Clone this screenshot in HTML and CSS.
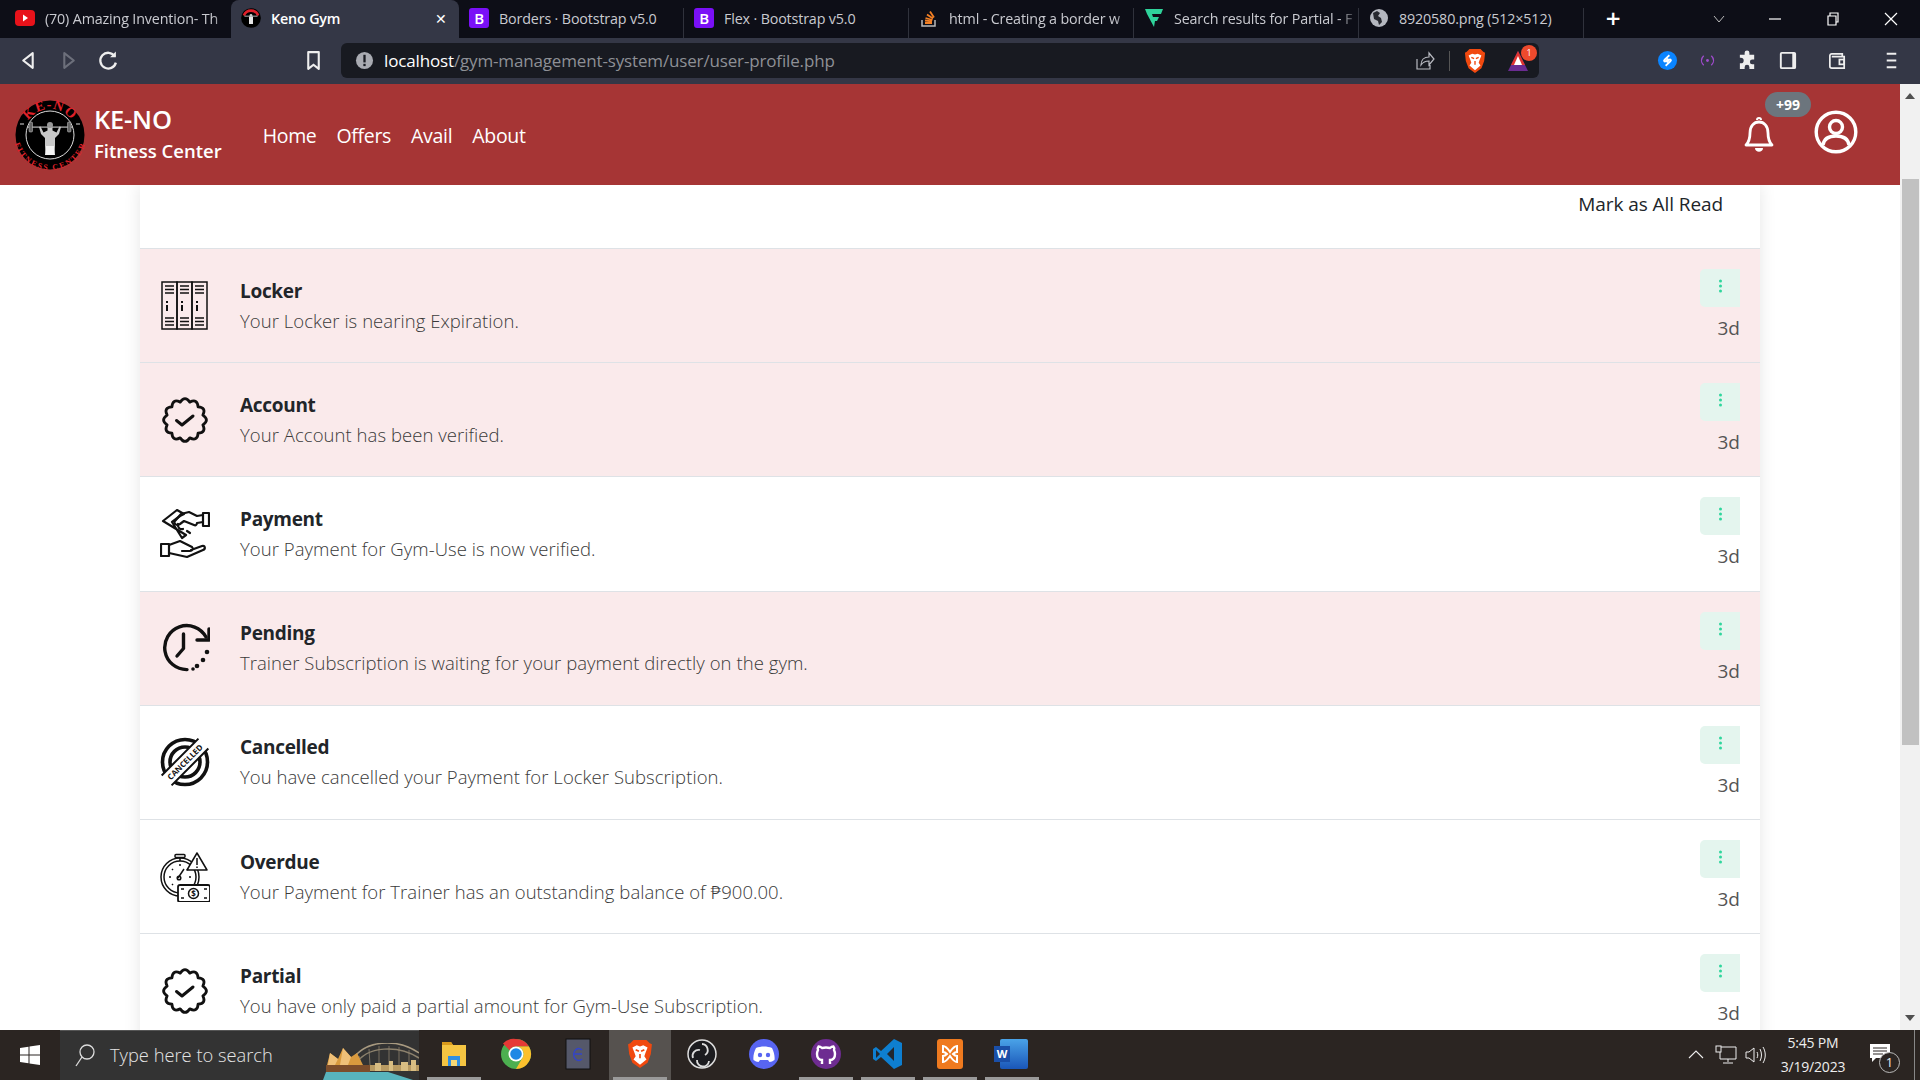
FILE: index.html

```html
<!DOCTYPE html>
<html lang="en">
<head>
  <meta charset="UTF-8" />
  <meta name="viewport" content="width=device-width, initial-scale=1.0"/>
  <title>Keno Gym</title>
  <link rel="stylesheet" href="styles.css">
</head>
<body>
  <svg class="defs" width="0" height="0">
    <symbol id="i-locker" viewBox="0 0 50 50">
      <g fill="none" stroke="#111" stroke-width="1.500">
        <rect x="2" y="1" width="15" height="47"/><rect x="17" y="1" width="15" height="47"/><rect x="32" y="1" width="15" height="47"/>
        <path d="M5 5h9M5 8.500h9M5 12h9M20 5h9M20 8.500h9M20 12h9M35 5h9M35 8.500h9M35 12h9"/>
        <path d="M5 37h9M5 40.500h9M5 44h9M20 37h9M20 40.500h9M20 44h9M35 37h9M35 40.500h9M35 44h9"/>
        <path d="M7 24v6M22 24v6M37 24v6" stroke-width="2"/>
        <path d="M7 20v2M22 20v2M37 20v2" stroke-width="2"/>
      </g>
    </symbol>
    <symbol id="i-badge" viewBox="0 0 50 50">
      <path fill="none" stroke="#111" stroke-width="2.800" stroke-linejoin="round" d="M20.210 7.130Q25 0 29.790 7.130Q37.500 3.350 38.080 11.920Q46.650 12.500 42.870 20.210Q50 25 42.870 29.790Q46.650 37.500 38.080 38.080Q37.500 46.650 29.790 42.870Q25 50 20.210 42.870Q12.500 46.650 11.920 38.080Q3.350 37.500 7.130 29.790Q0 25 7.130 20.210Q3.350 12.500 11.920 11.920Q12.500 3.350 20.210 7.130Z"/>
      <path fill="none" stroke="#111" stroke-width="3" stroke-linecap="round" stroke-linejoin="round" d="M16.500 25.500l5.500 4.500 11-9"/>
    </symbol>
    <symbol id="i-payment" viewBox="0 0 50 50">
      <g fill="none" stroke="#111" stroke-width="2.200" stroke-linejoin="round" stroke-linecap="round">
        <rect x="43" y="4" width="6" height="13"/>
        <path d="M3 12L17 1l7 4-4 2-8 6 10 16 4-3L3 12z"/>
        <path d="M43 6l-6 1-8-4-8 2-6 7c-2 3 2 5 5 3l4-3 5 2 5 2c2 1 3-1 3-2l6-1"/>
        <path d="M18 15c-1 3 2 6 5 5M27 22l3 2"/>
        <rect x="1" y="35" width="8" height="12"/>
        <path d="M9 36l11-4 12 6c2 2 0 4-2 4h-8M31 41l11-4c3-1 4 3 1 4l-16 7-18-4"/>
      </g>
    </symbol>
    <symbol id="i-pending" viewBox="0 0 50 50">
      <g fill="none" stroke="#111" stroke-width="3.400" stroke-linecap="round" stroke-linejoin="round">
        <path d="M27 46.600A22 22 0 1 1 46 14"/>
        <path d="M23.500 11v14.500L17 33"/>
        <path d="M49 6v11H37"/>
      </g>
      <g fill="#111"><circle cx="47" cy="29" r="2.300"/><circle cx="43" cy="37" r="2.300"/><circle cx="37" cy="43" r="2.300"/><circle cx="33" cy="46" r="1.800"/></g>
    </symbol>
    <symbol id="i-dots" viewBox="0 0 4 14">
      <circle cx="2" cy="2" r="1.500"/><circle cx="2" cy="7" r="1.500"/><circle cx="2" cy="12" r="1.500"/>
    </symbol>
    <symbol id="i-logo-mini" viewBox="0 0 70 70">
      <circle cx="35" cy="35" r="34.500" fill="#000"/>
      <path d="M10 26a27 27 0 0 1 50 0" fill="none" stroke="#e0202a" stroke-width="9"/>
      <rect x="12" y="27" width="46" height="3" fill="#ccc"/>
      <path d="M28 30h14v26H28z" fill="#e6e6e6"/>
      <circle cx="35" cy="26" r="5" fill="#ccc"/>
    </symbol>
    <symbol id="i-lion" viewBox="0 0 24 28">
      <path d="M6 1h12l3 3 2 1-1 9-3 8-7 5-7-5-3-8-1-9 2-1z" fill="#f1490f"/>
      <path d="M5 8l4-2 3 1 3-1 4 2-2 5-1 3 2 3-6 5-6-5 2-3-1-3z" fill="#fff"/>
      <path d="M8 10l3 1.500M16 10l-3 1.500M12 14v4" stroke="#f1490f" stroke-width="1.500"/>
    </symbol>
  </svg>

  <div class="tabstrip">
    <div class="tab first">
      <svg class="fav" viewBox="0 0 20 20"><rect y="2" width="20" height="16" rx="4" fill="#e8121a"/><path d="M8 6.500l5 3.500-5 3.500z" fill="#fff"/></svg>
      <span class="tab-title fade">(70) Amazing Invention- Th</span>
    </div>
    <div class="tab active">
      <svg class="fav"><use href="#i-logo-mini"/></svg>
      <span class="tab-title">Keno Gym</span>
      <span class="tab-x">✕</span>
    </div>
    <div class="tab">
      <span class="fav-b">B</span>
      <span class="tab-title">Borders · Bootstrap v5.0</span>
    </div>
    <div class="tab">
      <span class="fav-b">B</span>
      <span class="tab-title">Flex · Bootstrap v5.0</span>
    </div>
    <div class="tab">
      <svg class="fav" viewBox="0 0 20 20"><path d="M3 12v6h13v-6" fill="none" stroke="#bbb" stroke-width="1.500"/><path d="M6 15h7M6 12.500l7 .8M6.500 10l7 2M8 6.500l6 4M11 3.500l4 6" stroke="#f48024" stroke-width="1.800" fill="none"/></svg>
      <span class="tab-title fade">html - Creating a border w</span>
    </div>
    <div class="tab">
      <svg class="fav" viewBox="0 0 20 20"><path d="M1 1h18l-2 5H8l1 3h6l-2 4H11l-1 6L3 6z" fill="#2fd39b"/></svg>
      <span class="tab-title fade">Search results for Partial - F</span>
    </div>
    <div class="tab">
      <svg class="fav" viewBox="0 0 20 20"><circle cx="10" cy="10" r="9" fill="#b4b7bf"/><path d="M4 5l4-2 3 2-2 3 3 2 1 4-3 3-1-4-4-2z" fill="#26282f"/></svg>
      <span class="tab-title">8920580.png (512×512)</span>
    </div>
    <span class="newtab">+</span>
    <div class="win-btns">
      <svg viewBox="0 0 14 14" class="win chevron"><path d="M2 4l5 6 5-6" fill="none" stroke="#bbb"/></svg>
      <svg viewBox="0 0 14 14" class="win"><path d="M1 7h12" stroke="#fff" stroke-width="1.200"/></svg>
      <svg viewBox="0 0 14 14" class="win"><path d="M2 4h8v9H2zM4 4V1h8v9h-2" fill="none" stroke="#fff" stroke-width="1.200"/></svg>
      <svg viewBox="0 0 14 14" class="win"><path d="M1 1l12 12M13 1L1 13" stroke="#fff" stroke-width="1.200"/></svg>
    </div>
  </div>

  <div class="toolbar">
    <span class="tool"><svg viewBox="0 0 20 20"><path d="M14 3L5 10l9 7z" fill="none" stroke="#eee" stroke-width="2" stroke-linejoin="round"/></svg></span>
    <span class="tool"><svg viewBox="0 0 20 20"><path d="M6 3l9 7-9 7z" fill="none" stroke="#6c6f7b" stroke-width="2" stroke-linejoin="round"/></svg></span>
    <span class="tool"><svg viewBox="0 0 20 20"><path d="M16 6a7.500 7.500 0 1 0 1 6" fill="none" stroke="#eee" stroke-width="2.200"/><path d="M17 1.500V7h-5.500z" fill="#eee"/></svg></span>
    <span class="tool bookmark"><svg viewBox="0 0 20 20"><path d="M5 2h10v16l-5-4-5 4z" fill="none" stroke="#eee" stroke-width="2" stroke-linejoin="round"/></svg></span>
    <div class="urlbar">
      <svg class="url-info" viewBox="0 0 20 20"><circle cx="10" cy="10" r="9" fill="#a9abb2"/><rect x="8.800" y="4" width="2.400" height="8" fill="#181a21"/><rect x="8.800" y="13.500" width="2.400" height="2.400" fill="#181a21"/></svg>
      <span class="url"><span class="url-host">localhost</span>/gym-management-system/user/user-profile.php</span>
      <svg class="url-share" viewBox="0 0 20 20"><path d="M2 8v10h13v-4M6 14c0-5 3-8 8-8V2l5 6-5 6v-4c-4 0-6 1-8 4z" fill="none" stroke="#b9bbc2" stroke-width="1.200"/></svg>
      <span class="url-sep"></span>
      <svg class="url-lion"><use href="#i-lion"/></svg>
      <span class="url-alert">
        <svg viewBox="0 0 24 24"><path d="M12 2L22 22H2z" fill="#6a2c91"/><path d="M12 2L19 16H5z" fill="#e0342f"/><path d="M12 7l4 9H8z" fill="#fff"/></svg>
        <span class="alert-count">1</span>
      </span>
    </div>
    <span class="tool shazam"><svg viewBox="0 0 22 22"><circle cx="11" cy="11" r="10" fill="#0a84ff"/><path d="M13 5.500L8 10c-1.500 1.500 0 3 1.500 1.500L12 9M9 16.500l5-4.500c1.500-1.500 0-3-1.500-1.500L10 13" fill="none" stroke="#fff" stroke-width="1.800"/></svg></span>
    <span class="tool"><svg viewBox="0 0 22 22"><circle cx="11" cy="11" r="1.500" fill="#a24bd0"/><path d="M7 6c-3 3-3 7 0 10M15 6c3 3 3 7 0 10" fill="none" stroke="#a24bd0" stroke-width="1.400"/></svg></span>
    <span class="tool"><svg viewBox="0 0 22 22"><path d="M8 3a2.500 2.500 0 0 1 5 0v2h5v5h-2a2.500 2.500 0 0 0 0 5h2v5h-5v-2a2.500 2.500 0 0 0-5 0v2H3v-6h1a3 3 0 0 0 0-6H3V5h5z" fill="#eee"/></svg></span>
    <span class="tool"><svg viewBox="0 0 22 22"><rect x="4" y="3" width="15" height="16" rx="1" fill="none" stroke="#eee" stroke-width="2"/><rect x="16" y="3" width="3" height="16" fill="#eee"/></svg></span>
    <span class="tool wallet"><svg viewBox="0 0 22 22"><path d="M3 6a2 2 0 0 1 2-2h11v3H5M3 6v11a2 2 0 0 0 2 2h13V7H5" fill="none" stroke="#eee" stroke-width="1.800"/><rect x="13" y="10" width="5" height="5" fill="none" stroke="#eee" stroke-width="1.800"/></svg></span>
    <span class="tool menu"><svg viewBox="0 0 22 22"><path d="M6 4h10M6 11h10M6 18h10" stroke="#eee" stroke-width="2"/></svg></span>
  </div>

  <div class="viewport">
    <div class="page">
      <nav class="navbar">
        <svg class="brand-logo" viewBox="0 0 70 70">
          <circle cx="35" cy="35" r="34.500" fill="#000"/>
          <circle cx="35" cy="35" r="24" fill="#000" stroke="#ddd" stroke-width="1"/>
          <path id="arc-top" d="M9 35a26 26 0 0 1 52 0" fill="none"/>
          <path id="arc-bottom" d="M4 33a31 31 0 0 0 62 0" fill="none"/>
          <text class="logo-top"><textPath href="#arc-top" startOffset="50%">KE-NO</textPath></text>
          <text class="logo-bottom"><textPath href="#arc-bottom" startOffset="50%">FITNESS CENTER</textPath></text>
          <rect x="12" y="26.500" width="46" height="1.200" fill="#bbb"/>
          <rect x="14" y="22" width="3.500" height="10" rx="1" fill="#666" stroke="#ccc" stroke-width=".5"/><rect x="52.500" y="22" width="3.500" height="10" rx="1" fill="#666" stroke="#ccc" stroke-width=".5"/>
          <path d="M5 24h4M61 24h4" stroke="#ddd" stroke-width="1.200"/>
          <path d="M24 27l2 7 4 4v8l1 9h8l1-9v-8l4-4 2-7-1.500-.5-3 6-4-2v-4h-5v4l-4 2-3-6z" fill="#c8c8c8"/>
          <path d="M31 46h8l1 9H30z" fill="#f2f2f2"/>
          <circle cx="35" cy="25" r="3" fill="#999"/>
        </svg>
        <div class="brand-text">
          <span class="brand-name">KE-NO</span>
          <span class="brand-sub">Fitness Center</span>
        </div>
        <ul class="nav-links">
          <li>Home</li>
          <li>Offers</li>
          <li>Avail</li>
          <li>About</li>
        </ul>
        <div class="nav-icons">
          <span class="bell">
            <svg viewBox="0 0 32 36"><path d="M3 28c3-3 4-6 4-12 0-7 4-11 9-11s9 4 9 11c0 6 1 9 4 12z" fill="none" stroke="#fff" stroke-width="2.800" stroke-linejoin="round"/><path d="M12 31c0 5 8 5 8 0z" fill="#fff"/><path d="M14 3a2 2 0 0 1 4 0" fill="none" stroke="#fff" stroke-width="2"/></svg>
            <span class="badge-count">+99</span>
          </span>
          <svg class="profile" viewBox="0 0 44 44"><circle cx="22" cy="22" r="19.800" fill="none" stroke="#fff" stroke-width="3.400"/><circle cx="22" cy="17" r="6.500" fill="none" stroke="#fff" stroke-width="3.400"/><path d="M9 35c1-7 6-9 13-9s12 2 13 9" fill="none" stroke="#fff" stroke-width="3.400"/></svg>
        </div>
      </nav>

      <main class="content">
        <section class="card">
          <div class="card-head">Mark as All Read</div>

          <div class="notif unread">
            <svg class="notif-icon"><use href="#i-locker"/></svg>
            <div class="notif-body"><h5>Locker</h5><p>Your Locker is nearing Expiration.</p></div>
            <div class="notif-side"><span class="more"><svg><use href="#i-dots"/></svg></span><span class="age">3d</span></div>
          </div>
          <div class="notif unread">
            <svg class="notif-icon"><use href="#i-badge"/></svg>
            <div class="notif-body"><h5>Account</h5><p>Your Account has been verified.</p></div>
            <div class="notif-side"><span class="more"><svg><use href="#i-dots"/></svg></span><span class="age">3d</span></div>
          </div>
          <div class="notif">
            <svg class="notif-icon"><use href="#i-payment"/></svg>
            <div class="notif-body"><h5>Payment</h5><p>Your Payment for Gym-Use is now verified.</p></div>
            <div class="notif-side"><span class="more"><svg><use href="#i-dots"/></svg></span><span class="age">3d</span></div>
          </div>
          <div class="notif unread">
            <svg class="notif-icon"><use href="#i-pending"/></svg>
            <div class="notif-body"><h5>Pending</h5><p>Trainer Subscription is waiting for your payment directly on the gym.</p></div>
            <div class="notif-side"><span class="more"><svg><use href="#i-dots"/></svg></span><span class="age">3d</span></div>
          </div>
          <div class="notif">
            <svg class="notif-icon" viewBox="0 0 50 50">
              <g fill="none" stroke="#111">
                <circle cx="25" cy="25" r="22.500" stroke-width="3.600"/>
                <circle cx="25" cy="25" r="15" stroke-width="3.600"/>
              </g>
              <g transform="rotate(-45 25 25)">
                <rect x="-4" y="18" width="58" height="14" fill="#fff"/>
                <path d="M-1 18h52M-1 32h52" stroke="#111" stroke-width="2"/>
                <text x="25" y="28" class="stamp">CANCELLED</text>
              </g>
            </svg>
            <div class="notif-body"><h5>Cancelled</h5><p>You have cancelled your Payment for Locker Subscription.</p></div>
            <div class="notif-side"><span class="more"><svg><use href="#i-dots"/></svg></span><span class="age">3d</span></div>
          </div>
          <div class="notif">
            <svg class="notif-icon" viewBox="0 0 50 50">
              <g fill="none" stroke="#111" stroke-width="1.500">
                <circle cx="20" cy="25" r="19"/><circle cx="20" cy="25" r="16"/>
                <rect x="15" y="2.500" width="10" height="3" rx="1"/><path d="M20 6v3M18 26l6-9"/>
                <circle cx="19" cy="26" r="1.800"/>
                <path d="M20 12v2M9 25h2M29 25h2M12 17l1 1M28 17l-1 1M12 33l1-1"/>
                <path d="M37 1L27 18h20L37 1z" fill="#fff" stroke-linejoin="round"/>
                <path d="M37 6v7M37 14.500v1.500"/>
                <rect x="18" y="33" width="32" height="17" rx="2" fill="#fff" stroke-width="1.800"/>
                <circle cx="33.500" cy="41.500" r="5"/>
                <path d="M21 37h3M47 37h-3M21 46h3M47 46h-3"/>
              </g>
              <text x="33.500" y="44.500" class="note">$</text>
            </svg>
            <div class="notif-body"><h5>Overdue</h5><p>Your Payment for Trainer has an outstanding balance of ₱900.00.</p></div>
            <div class="notif-side"><span class="more"><svg><use href="#i-dots"/></svg></span><span class="age">3d</span></div>
          </div>
          <div class="notif">
            <svg class="notif-icon"><use href="#i-badge"/></svg>
            <div class="notif-body"><h5>Partial</h5><p>You have only paid a partial amount for Gym-Use Subscription.</p></div>
            <div class="notif-side"><span class="more"><svg><use href="#i-dots"/></svg></span><span class="age">3d</span></div>
          </div>
        </section>
      </main>
    </div>

    <div class="scrollbar">
      <span class="arrow up"></span>
      <span class="thumb"></span>
      <span class="arrow down"></span>
    </div>
  </div>

  <footer class="taskbar">
    <span class="start"><svg viewBox="0 0 20 20"><path d="M0 3l8.500-1.200V9.500H0zM9.500 1.600L20 0v9.500H9.500zM0 10.500h8.500v7.700L0 17zM9.500 10.500H20V20L9.500 18.400z" fill="#fff"/></svg></span>
    <div class="search">
      <svg class="search-icon" viewBox="0 0 20 24"><circle cx="12" cy="9" r="7" fill="none" stroke="#ddd" stroke-width="1.300"/><path d="M7 14l-6 9" stroke="#ddd" stroke-width="1.300"/></svg>
      <span class="search-text">Type here to search</span>
      <svg class="search-art" viewBox="0 0 96 37">
        <path d="M26 22C40 -6 76 -4 96 10" fill="none" stroke="#a89a80" stroke-width="1.500"/>
        <path d="M32 22C44 2 76 2 96 15" fill="none" stroke="#8d826d" stroke-width="1.500"/>
        <path d="M36 13l2 9M46 6l1 16M56 3v19M66 3v19M76 4v18M86 7v15" stroke="#8d826d" stroke-width=".8"/>
        <path d="M44 22h52v6H44z" fill="#b89a62"/>
        <path d="M52 20h6v8h-6zM66 18h4v10h-4zM78 19h7v9h-7zM88 17h5v11h-5z" fill="#d8bd82"/>
        <path d="M4 22L7 10l8 6 5-11 8 9 6-4 6 12z" fill="#d99a3e"/>
        <path d="M7 10l8 6-3 6H5zM20 5l8 9-3 8h-8z" fill="#efc078"/>
        <path d="M3 22h44v7H3z" fill="#7c4d2b"/>
        <path d="M0 37l3-8h62l25 8z" fill="#58b4bd"/>
      </svg>
    </div>
    <div class="task-apps">
      <span class="app open"><svg viewBox="0 0 32 32"><path d="M4 4h9l2 3h13v21H4z" fill="#f5c542"/><path d="M4 4h9l2 3H4z" fill="#d99a1c"/><path d="M10 18h12v10H10z" fill="#2f8fe0"/><path d="M13 22h6v6h-6z" fill="#f5d774"/></svg></span>
      <span class="app"><svg viewBox="0 0 32 32"><circle cx="16" cy="16" r="15" fill="#4caf50"/><path d="M16 1a15 15 0 0 1 13 7.500H16a7.500 7.500 0 0 0-6.500 3.750L3 5.500A15 15 0 0 1 16 1z" fill="#e53935"/><path d="M29 8.500A15 15 0 0 1 16 31l6.500-11.250A7.500 7.500 0 0 0 16 8.500z" fill="#fbc02d"/><circle cx="16" cy="16" r="7.500" fill="#fff"/><circle cx="16" cy="16" r="5.800" fill="#1e88e5"/></svg></span>
      <span class="app"><svg viewBox="0 0 32 32"><rect x="4" y="1" width="24" height="30" fill="#55586a" stroke="#111"/><path d="M20 12a5 6 0 1 0 0 9M11 16h9" fill="none" stroke="#3344c9" stroke-width="1.500"/></svg></span>
      <span class="app open current"><svg class="lion"><use href="#i-lion"/></svg></span>
      <span class="app"><svg viewBox="0 0 32 32"><circle cx="16" cy="16" r="14" fill="#1c1c1f" stroke="#ddd" stroke-width="1.500"/><path d="M16 6a6 6 0 0 1 3 11M7 20a6 6 0 0 1 7-8M23 23a6 6 0 0 1-12-1" fill="none" stroke="#ddd" stroke-width="1.800"/></svg></span>
      <span class="app"><svg viewBox="0 0 32 32"><circle cx="16" cy="16" r="15" fill="#5865f2"/><path d="M8 10c5-2 11-2 16 0 2 4 3 8 2.500 12-2 1-3 2-5 2l-1.500-2H12l-1.500 2c-2 0-3-1-5-2-.5-4 .5-8 2.500-12z" fill="#fff"/><circle cx="12" cy="17" r="2.200" fill="#5865f2"/><circle cx="20" cy="17" r="2.200" fill="#5865f2"/></svg></span>
      <span class="app open"><svg viewBox="0 0 32 32"><circle cx="16" cy="16" r="15" fill="#6e2c91"/><path d="M12 26v-4c-3 0-5-2-5-6 0-2 .5-3 1-4-.3-1 0-3 .5-3.500 1.500 0 3 1 3.500 1.500 2.500-.6 5.500-.6 8 0 .5-.5 2-1.500 3.500-1.500.5.500.8 2.500.5 3.500.5 1 1 2 1 4 0 4-2 6-5 6v4" fill="none" stroke="#fff" stroke-width="2.400"/></svg></span>
      <span class="app open"><svg viewBox="0 0 32 32"><path d="M22 1l8 4v22l-8 4L9 19l-5 4-3-2v-10l3-2 5 4z" fill="#0e7fd0"/><path d="M22 9l-7 7 7 7z" fill="#22272e"/><path d="M4 12l4 4-4 4z" fill="#22272e"/></svg></span>
      <span class="app open"><svg viewBox="0 0 32 32"><rect x="3" y="1" width="26" height="30" rx="3" fill="#ef7a1f"/><path d="M9 8c3 0 5 3 7 6 2-3 4-6 7-6v6c-2 0-3 1-4 2 1 1 2 2 4 2v6c-3 0-5-3-7-6-2 3-4 6-7 6v-6c2 0 3-1 4-2-1-1-2-2-4-2z" fill="none" stroke="#fff" stroke-width="2"/></svg></span>
      <span class="app open"><span class="word"><span class="word-w">W</span></span></span>
    </div>
    <div class="tray">
      <svg class="tray-icon chev" viewBox="0 0 18 18"><path d="M2 12l7-7 7 7" fill="none" stroke="#eee" stroke-width="1.100"/></svg>
      <svg class="tray-icon net" viewBox="0 0 22 20"><path d="M5 2h16v12H5zM13 14v3M8 18h10" fill="none" stroke="#eee"/><rect x="1" y="1" width="5" height="6" fill="#2b2522" stroke="#eee"/></svg>
      <svg class="tray-icon vol" viewBox="0 0 22 20"><path d="M2 7h3l5-4v14l-5-4H2zM13 7c1 2 1 4 0 6M16 4c2 4 2 8 0 12M19 2c3 5 3 11 0 16" fill="none" stroke="#eee"/></svg>
      <div class="clock"><span>5:45 PM</span><span>3/19/2023</span></div>
      <span class="notify">
        <svg viewBox="0 0 20 18"><path d="M0 0h20v14H6l-4 4v-4H0z" fill="#fff"/><path d="M3 4h14M3 7h14M3 10h10" stroke="#2b2522"/></svg>
        <span class="notify-count">1</span>
      </span>
      <span class="show-desktop"></span>
    </div>
  </footer>
</body>
</html>
```

FILE: styles.css

```css
:root {
  --vermelho: #a63535;
  --tab-bg: #0d0e17;
  --tool-bg: #343746;
  --unread: #faeaeb;
  --linha: #dee2e6;
  --texto: #212529;
}
* {
  box-sizing: border-box;
}
html, body {
  height: 100%;
}
body {
  margin: 0;
  font-family: "Open Sans", "Noto Sans", sans-serif;
  color: var(--texto);
  background: #fff;
  display: flex;
  flex-direction: column;
  overflow: hidden;
}
.defs {
  position: absolute;
}

/* browser chrome */
.tabstrip {
  height: 38px;
  flex: none;
  display: flex;
  align-items: stretch;
  background: var(--tab-bg);
  font-size: 14.300px;
  letter-spacing: -0.15px;
  color: #c9cad0;
}
.tab {
  width: 225px;
  display: flex;
  align-items: center;
  gap: 10px;
  padding-left: 10px;
  border-right: 1px solid #30323c;
  margin: 8px 0 0;
  padding-bottom: 10px;
  white-space: nowrap;
}
.tab.first {
  width: 231px;
  padding-left: 15px;
  border-right: none;
}
.tab.active {
  width: 228px;
  margin: 0;
  padding: 0 12px 2px 10px;
  border: none;
  border-radius: 8px 8px 0 0;
  background: var(--tool-bg);
  color: #fff;
  font-weight: 600;
}
.tab-title {
  flex: 1;
}
.tab-title.fade {
  -webkit-mask-image: linear-gradient(to right, #000 90%, transparent);
  mask-image: linear-gradient(to right, #000 90%, transparent);
}
.tab-x {
  font-size: 14px;
  font-weight: 400;
}
.fav {
  width: 20px;
  height: 20px;
  flex: none;
}
.fav-b {
  width: 20px;
  height: 20px;
  flex: none;
  border-radius: 3px;
  background: #7a10f7;
  color: #fff;
  font-size: 15px;
  font-weight: 600;
  line-height: 20px;
  text-align: center;
}
.newtab {
  width: 58px;
  color: #fff;
  font-size: 26px;
  font-weight: 600;
  text-align: center;
  line-height: 36px;
}
.win-btns {
  margin-left: auto;
  display: flex;
  align-items: center;
  gap: 44px;
  padding-right: 22px;
}
.win {
  width: 14px;
  height: 14px;
}
.win.chevron {
  margin-right: -2px;
}
.toolbar {
  height: 46px;
  flex: none;
  display: flex;
  align-items: center;
  padding: 0 0 1px 8px;
  background: var(--tool-bg);
}
.tool {
  width: 40px;
  height: 30px;
  flex: none;
  display: flex;
  align-items: center;
  justify-content: center;
}
.tool svg {
  width: 21px;
  height: 21px;
}
.tool.bookmark {
  width: 24px;
  margin-left: 173px;
}
.tool.shazam {
  margin-left: 108px;
}
.tool.wallet {
  margin-left: 10px;
}
.tool.menu {
  margin-left: 14px;
}
.urlbar {
  width: 1198px;
  height: 35px;
  margin-left: 16px;
  flex: none;
  display: flex;
  align-items: center;
  padding: 0 8px 0 14px;
  border-radius: 6px;
  background: #181a21;
}
.url-info {
  width: 19px;
  height: 19px;
  flex: none;
}
.url {
  margin-left: 10px;
  flex: 1;
  font-size: 17px;
  letter-spacing: -0.15px;
  color: #8e9096;
}
.url-host {
  color: #fff;
}
.url-share {
  width: 20px;
  height: 20px;
}
.url-sep {
  width: 1px;
  height: 20px;
  margin: 0 14px;
  background: #555;
}
.url-lion {
  width: 22px;
  height: 26px;
}
.url-alert {
  position: relative;
  width: 24px;
  height: 24px;
  margin: 0 1px 0 20px;
}
.url-alert svg {
  width: 24px;
  height: 24px;
}
.alert-count {
  position: absolute;
  top: -4px;
  right: -7px;
  width: 16px;
  height: 16px;
  border-radius: 50%;
  background: #ee4a2d;
  color: #fff;
  font-size: 9px;
  line-height: 16px;
  text-align: center;
}

/* page */
.viewport {
  flex: 1;
  min-height: 0;
  display: flex;
}
.page {
  flex: 1;
  min-width: 0;
  display: flex;
  flex-direction: column;
}
.navbar {
  height: 101px;
  flex: none;
  display: flex;
  align-items: center;
  padding: 0 42px 0 15px;
  background: var(--vermelho);
  color: #fff;
}
.brand-logo {
  width: 70px;
  height: 70px;
  flex: none;
}
.brand-text {
  display: flex;
  flex-direction: column;
  margin: -2px 0 0 9px;
  font-weight: 600;
}
.brand-name {
  font-size: 25.500px;
  line-height: 34px;
  letter-spacing: -0.2px;
}
.brand-sub {
  font-size: 18.500px;
  line-height: 30px;
}
.nav-links {
  display: flex;
  gap: 20px;
  margin: 2px 0 0 41px;
  padding: 0;
  list-style: none;
  font-size: 19.500px;
  letter-spacing: -0.32px;
}
.nav-icons {
  margin-left: auto;
  display: flex;
  align-items: center;
  gap: 39px;
}
.bell {
  position: relative;
  width: 32px;
  height: 36px;
}
.bell svg {
  width: 32px;
  height: 36px;
}
.badge-count {
  position: absolute;
  top: -25px;
  left: 22px;
  width: 46px;
  height: 25px;
  border-radius: 13px;
  background: #6c757d;
  color: #fff;
  font-size: 14px;
  font-weight: 700;
  line-height: 25px;
  text-align: center;
}
.profile {
  width: 44px;
  height: 44px;
  margin-top: -5px;
}
.content {
  flex: 1;
  min-height: 0;
  padding: 0 140px;
  overflow: hidden;
}
.card {
  background: #fff;
  box-shadow: 0 0 16px rgba(0, 0, 0, 0.1);
}
.card-head {
  height: 63px;
  padding: 6px 37px 0 0;
  font-size: 19px;
  letter-spacing: -0.08px;
  text-align: right;
}
.notif {
  height: 114.200px;
  display: flex;
  align-items: center;
  padding: 0 20px;
  border-top: 1px solid var(--linha);
}
.notif.unread {
  background: var(--unread);
}
.notif-icon {
  width: 50px;
  height: 50px;
  flex: none;
}
.notif-body {
  flex: 1;
  margin-left: 30px;
}
.notif-body h5 {
  margin: 0 0 2px;
  font-size: 19px;
  font-weight: 700;
  line-height: 28px;
  letter-spacing: -0.3px;
}
.notif-body p {
  margin: 0;
  font-size: 18.500px;
  font-weight: 300;
  line-height: 28px;
  letter-spacing: 0.05px;
  color: #3a3a3a;
}
.notif-side {
  align-self: flex-start;
  display: flex;
  flex-direction: column;
  align-items: flex-end;
  gap: 7px;
  padding-top: 20px;
}
.more {
  width: 40px;
  height: 38px;
  display: flex;
  align-items: center;
  justify-content: center;
  border-radius: 5px 0 0 5px;
  background: #e4f5ee;
}
.more svg {
  width: 5px;
  height: 14px;
  margin-top: -4px;
  fill: #2fd69c;
}
.age {
  font-size: 19px;
  line-height: 28px;
  color: #555;
}
.stamp {
  font-family: "Open Sans", sans-serif;
  font-size: 8px;
  font-weight: 700;
  text-anchor: middle;
  fill: #111;
}
.note {
  font-family: "Open Sans", sans-serif;
  font-size: 8px;
  font-weight: 700;
  text-anchor: middle;
  fill: #111;
}
.logo-top {
  font-family: "Liberation Serif", serif;
  font-size: 14px;
  font-weight: 700;
  letter-spacing: 1px;
  text-anchor: middle;
  fill: #e0202a;
}
.logo-bottom {
  font-family: "Liberation Serif", serif;
  font-size: 8px;
  font-weight: 700;
  letter-spacing: 0.8px;
  text-anchor: middle;
  dominant-baseline: hanging;
  fill: #e0202a;
}
.scrollbar {
  width: 20px;
  flex: none;
  display: flex;
  flex-direction: column;
  align-items: center;
  background: #f1f1f1;
}
.arrow {
  width: 0;
  height: 0;
  margin: 9px 0;
  border-left: 5px solid transparent;
  border-right: 5px solid transparent;
}
.arrow.up {
  border-bottom: 6px solid #505050;
}
.arrow.down {
  margin-top: auto;
  border-top: 6px solid #505050;
}
.thumb {
  width: 17px;
  height: 566px;
  margin-top: 71px;
  background: #c1c1c1;
}

/* windows taskbar */
.taskbar {
  height: 50px;
  flex: none;
  display: flex;
  align-items: stretch;
  background: #2b2522;
  color: #eee;
}
.start {
  width: 60px;
  display: flex;
  align-items: center;
  justify-content: center;
}
.start svg {
  width: 20px;
  height: 20px;
}
.search {
  position: relative;
  width: 359px;
  display: flex;
  align-items: center;
  padding: 0 0 2px 15px;
  overflow: hidden;
  background: #333;
  border-top: 1px solid #555;
}
.search-icon {
  width: 20px;
  height: 24px;
}
.search-text {
  margin-left: 15px;
  font-size: 18.300px;
  font-weight: 300;
  color: #e4e4e4;
}
.search-art {
  position: absolute;
  right: 0;
  bottom: 0;
  width: 96px;
  height: 37px;
}
.task-apps {
  display: flex;
  margin-left: 4px;
}
.app {
  width: 62px;
  display: flex;
  align-items: center;
  justify-content: center;
  border-bottom: 3px solid transparent;
}
.app svg {
  width: 32px;
  height: 32px;
}
.app svg.lion {
  width: 26px;
  height: 32px;
}
.app.open {
  border-image: linear-gradient(to right, transparent 8%, #9a9a9a 8%, #9a9a9a 92%, transparent 92%) 1;
}
.app.current {
  background: #56524f;
}
.word {
  position: relative;
  width: 28px;
  height: 30px;
  margin-left: 4px;
  border-radius: 2px;
  background: linear-gradient(#4aa3e8, #1a56b8);
}
.word-w {
  position: absolute;
  top: 7px;
  left: -6px;
  width: 16px;
  height: 16px;
  background: #1a4fa8;
  color: #fff;
  font-size: 11px;
  font-weight: 700;
  line-height: 16px;
  text-align: center;
}
.tray {
  margin-left: auto;
  display: flex;
  align-items: center;
}
.tray-icon {
  width: 18px;
  height: 18px;
}
.tray-icon.chev {
  margin-right: 10px;
}
.tray-icon.net {
  width: 22px;
  height: 20px;
  margin-right: 7px;
}
.tray-icon.vol {
  width: 22px;
  height: 20px;
  margin-right: 8px;
}
.clock {
  display: flex;
  flex-direction: column;
  align-items: center;
  width: 78px;
  font-size: 14px;
  line-height: 24px;
  letter-spacing: -0.2px;
}
.notify {
  position: relative;
  width: 20px;
  height: 18px;
  margin: -4px 24px 0 18px;
}
.notify svg {
  width: 20px;
  height: 18px;
}
.notify-count {
  position: absolute;
  top: 8px;
  left: 9px;
  width: 21px;
  height: 21px;
  border: 1px solid #bbb;
  border-radius: 50%;
  background: #2b2522;
  font-size: 13px;
  line-height: 19px;
  text-align: center;
}
.show-desktop {
  width: 1px;
  height: 100%;
  margin-right: 5px;
  background: #888;
}
```
